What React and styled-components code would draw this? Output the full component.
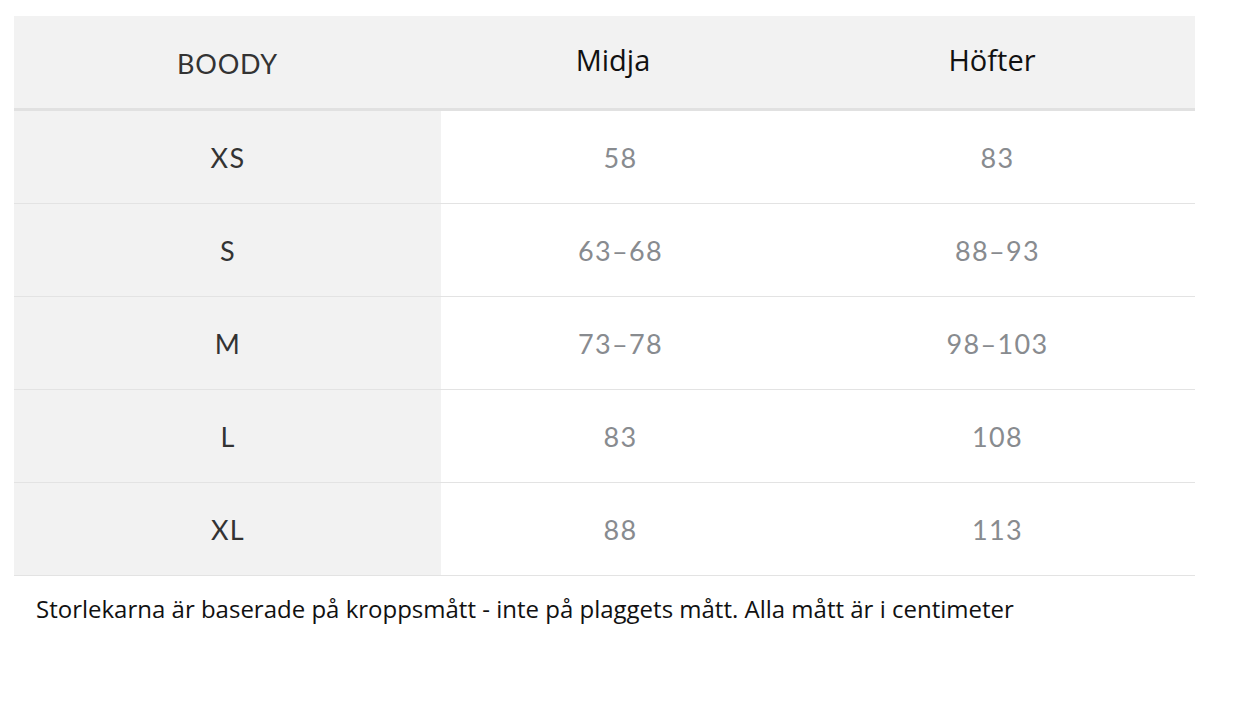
import styled, { createGlobalStyle } from "styled-components";

const GlobalStyle = createGlobalStyle`
  body {
    margin: 0;
    background: #ffffff;
  }
`;

const SIZES = [
  { size: "XS", waist: "58", hips: "83" },
  { size: "S", waist: "63–68", hips: "88–93" },
  { size: "M", waist: "73–78", hips: "98–103" },
  { size: "L", waist: "83", hips: "108" },
  { size: "XL", waist: "88", hips: "113" },
];

const Page = styled.div`
  padding: 16px 0 0 14px;
`;

const Table = styled.div`
  width: 1181px;
  display: grid;
  grid-template-columns: 427px 358px 396px;
`;

const HeadCell = styled.div`
  height: 92px;
  background: #f2f2f2;
  border-bottom: 3px solid #e1e1e1;
  display: flex;
  align-items: center;
  justify-content: center;
  padding-right: ${(p) => p.$shift || 0}px;
  font-family: ${(p) => (p.$brand ? '"Lato"' : '"Open Sans"')}, sans-serif;
  font-size: ${(p) => (p.$brand ? "27px" : "29px")};
  color: ${(p) => (p.$brand ? "#333333" : "#111111")};
  letter-spacing: ${(p) => (p.$brand ? "0.8px" : "0")};
  & > span {
    position: relative;
    top: ${(p) => (p.$brand ? "1px" : "-3px")};
  }
`;

const Cell = styled.div`
  height: 92px;
  border-bottom: 1px solid #e3e3e3;
  background: ${(p) => (p.$label ? "#f2f2f2" : "#ffffff")};
  color: ${(p) => (p.$label ? "#333333" : "#888b8f")};
  display: flex;
  align-items: center;
  justify-content: center;
  padding-left: 1px;
  font-family: "Lato", sans-serif;
  font-size: 27px;
  letter-spacing: 1.3px;
`;

const Note = styled.p`
  margin: 16px 0 0 22px;
  font-family: "Open Sans", sans-serif;
  font-size: 24px;
  color: #111111;
`;

export default function App() {
  return (
    <Page>
      <GlobalStyle />
      <Table>
        <HeadCell $brand>
          <span>BOODY</span>
        </HeadCell>
        <HeadCell $shift={14}>
          <span>Midja</span>
        </HeadCell>
        <HeadCell $shift={10}>
          <span>Höfter</span>
        </HeadCell>
        {SIZES.map((row) => [
          <Cell key={row.size + "-s"} $label>
            {row.size}
          </Cell>,
          <Cell key={row.size + "-w"}>{row.waist}</Cell>,
          <Cell key={row.size + "-h"}>{row.hips}</Cell>,
        ])}
      </Table>
      <Note>
        Storlekarna är baserade på kroppsmått - inte på plaggets mått. Alla
        mått är i centimeter
      </Note>
    </Page>
  );
}
